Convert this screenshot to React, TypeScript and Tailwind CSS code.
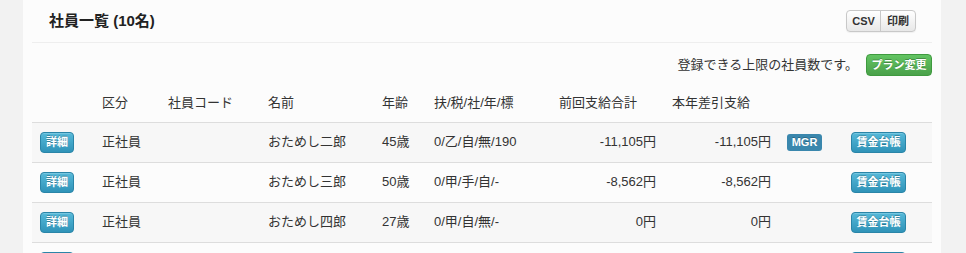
import React from 'react';

type Row = {
  kubun: string;
  code: string;
  name: string;
  age: string;
  info: string;
  prev: string;
  year: string;
  mgr?: boolean;
};

const rows: Row[] = [
  { kubun: '正社員', code: '', name: 'おためし二郎', age: '45歳', info: '0/乙/自/無/190', prev: '-11,105円', year: '-11,105円', mgr: true },
  { kubun: '正社員', code: '', name: 'おためし三郎', age: '50歳', info: '0/甲/手/自/-', prev: '-8,562円', year: '-8,562円' },
  { kubun: '正社員', code: '', name: 'おためし四郎', age: '27歳', info: '0/甲/自/無/-', prev: '0円', year: '0円' },
  { kubun: '正社員', code: '', name: 'おためし五郎', age: '33歳', info: '0/甲/自/無/-', prev: '0円', year: '0円' },
];

const infoBtn =
  'inline-flex items-center justify-center h-[21px] rounded-[4px] border border-[#2a85a8] bg-gradient-to-b from-[#55b9d9] to-[#2f93b8] text-white text-[11px] font-bold [text-shadow:0_-1px_0_rgba(0,0,0,0.25)] shadow-[inset_0_1px_0_rgba(255,255,255,0.2)]';

export default function App() {
  return (
    <div
      className="h-[253px] overflow-hidden bg-[#f2f2f2] pl-[23px] pr-[25px] text-[13px] text-[#333]"
      style={{ fontFamily: '"Liberation Sans", "Noto Sans CJK JP", sans-serif' }}
    >
      <div className="min-h-[253px] bg-[#fcfcfc] px-[9px]">
        {/* header */}
        <div className="flex h-[43px] items-center justify-between border-b border-[#eeeeee] pl-[17px] pr-[16px]">
          <h2 className="text-[15px] font-bold text-[#222]">社員一覧 (10名)</h2>
          <div className="flex h-[22px] rounded-[4px] border border-[#c8c8c8] bg-gradient-to-b from-white to-[#e8e8e8] text-[11px] font-bold text-[#333] shadow-[0_1px_1px_rgba(0,0,0,0.05)]">
            <span className="flex w-[34px] items-center justify-center border-r border-[#c8c8c8]">CSV</span>
            <span className="flex w-[34px] items-center justify-center">印刷</span>
          </div>
        </div>

        {/* plan */}
        <div className="flex items-center justify-end gap-[8px] pt-[11px]">
          <span className="text-[13px]">登録できる上限の社員数です。</span>
          <span className="inline-flex h-[22px] w-[66px] items-center justify-center rounded-[4px] border border-[#3f9a3f] bg-gradient-to-b from-[#62c462] to-[#4aa14a] text-[11px] font-bold text-white [text-shadow:0_-1px_0_rgba(0,0,0,0.25)]">
            プラン変更
          </span>
        </div>

        {/* table */}
        <table className="mt-[8px] w-full table-fixed border-collapse">
          <thead>
            <tr className="h-[38px] text-left">
              <th className="w-[62px] font-normal"></th>
              <th className="w-[66px] px-[8px] font-normal">区分</th>
              <th className="w-[100px] px-[8px] font-normal">社員コード</th>
              <th className="w-[114px] px-[8px] font-normal">名前</th>
              <th className="w-[52px] px-[8px] font-normal">年齢</th>
              <th className="w-[125px] px-[8px] font-normal">扶/税/社/年/標</th>
              <th className="w-[113px] px-[8px] font-normal">前回支給合計</th>
              <th className="w-[115px] px-[8px] font-normal">本年差引支給</th>
              <th className="w-[64px] px-[8px] font-normal"></th>
              <th className="px-[8px] font-normal"></th>
            </tr>
          </thead>
          <tbody>
            {rows.map((r, i) => (
              <tr
                key={i}
                className={`h-[40px] border-t border-[#dddddd] ${i % 2 === 0 ? 'bg-[#f7f7f7]' : 'bg-[#fcfcfc]'}`}
              >
                <td className="px-[8px]">
                  <span className={`${infoBtn} w-[34px]`}>詳細</span>
                </td>
                <td className="px-[8px]">{r.kubun}</td>
                <td className="px-[8px]">{r.code}</td>
                <td className="px-[8px]">{r.name}</td>
                <td className="px-[8px]">{r.age}</td>
                <td className="px-[8px]">{r.info}</td>
                <td className="px-[8px] text-right">{r.prev}</td>
                <td className="px-[8px] text-right">{r.year}</td>
                <td className="px-[8px]">
                  {r.mgr && (
                    <span className="inline-flex h-[17px] w-[35px] items-center justify-center rounded-[3px] bg-[#3a87ad] text-[11px] font-bold text-white [text-shadow:0_-1px_0_rgba(0,0,0,0.25)]">
                      MGR
                    </span>
                  )}
                </td>
                <td className="px-[8px]">
                  <span className={`${infoBtn} w-[55px]`}>賃金台帳</span>
                </td>
              </tr>
            ))}
          </tbody>
        </table>
      </div>
    </div>
  );
}
